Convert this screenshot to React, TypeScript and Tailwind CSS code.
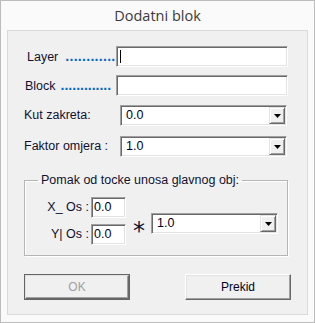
import React from "react";

const sunken =
  "border border-t-[#a0a0a0] border-l-[#a0a0a0] border-b-white border-r-white shadow-[inset_1px_1px_0_#696969,inset_-1px_-1px_0_#e3e3e3] bg-white";

function Arrow() {
  return (
    <div className="w-[16px] h-[17px] bg-[#f0f0f0] border border-t-[#e3e3e3] border-l-[#e3e3e3] border-b-[#696969] border-r-[#696969] shadow-[inset_1px_1px_0_#ffffff,inset_-1px_-1px_0_#a0a0a0] flex items-center justify-center">
      <svg width="7" height="4" viewBox="0 0 7 4">
        <path d="M0 0H7L3.5 4Z" fill="#000" />
      </svg>
    </div>
  );
}

function Select({ value, w }: { value: string; w: string }) {
  return (
    <div className={`${sunken} ${w} h-[21px] flex items-center pl-[5px] pr-[1px] justify-between`}>
      <span className="text-[#000022]">{value}</span>
      <Arrow />
    </div>
  );
}

export default function App() {
  return (
    <div className="w-[315px] h-[323px] border border-[#bcbcbc] bg-[#fafafa] flex flex-col font-['Liberation_Sans',Arial,sans-serif] text-[12.5px] text-black">
      <div className="h-[29px] flex items-center justify-center font-['Open_Sans',sans-serif] text-[14.5px] text-[#3a3a3a]">
        Dodatni blok
      </div>
      <div className="ml-[6px] w-[301px] h-[285px] border border-[#dadada] bg-[#f0f0f0] flex flex-col">
        <div className="flex items-center h-[20px] mt-[15px]">
          <div className="w-[108px] pl-[19px] text-[#101030] whitespace-nowrap">
            Layer
            <span className="ml-[7px] text-[14px] font-bold text-[#0066cc] tracking-[0.3px]">............</span>
          </div>
          <div className={`${sunken} w-[172px] h-[21px] flex items-center pl-[3px]`}>
            <div className="w-[1px] h-[13px] bg-black" />
          </div>
        </div>
        <div className="flex items-center h-[20px] mt-[9px]">
          <div className="w-[108px] pl-[17px] text-[#101030] whitespace-nowrap">
            Block
            <span className="ml-[5px] text-[14px] font-bold text-[#0066cc] tracking-[0px]">.............</span>
          </div>
          <div className={`${sunken} w-[172px] h-[21px]`} />
        </div>
        <div className="flex items-center h-[21px] mt-[10px]">
          <div className="w-[112px] pl-[16px] text-[#101030]">Kut zakreta:</div>
          <Select value="0.0" w="w-[167px]" />
        </div>
        <div className="flex items-center h-[21px] mt-[10px]">
          <div className="w-[112px] pl-[16px] text-[#101030]">Faktor omjera :</div>
          <Select value="1.0" w="w-[167px]" />
        </div>
        <fieldset className="ml-[16px] mt-[15px] w-[264px] h-[84px] border border-[#b5b5b5] shadow-[1px_1px_0_#ffffff,inset_1px_1px_0_#ffffff] flex">
          <legend className="ml-[13px] px-[3px] text-[#101030] leading-[16px]">
            Pomak od tocke unosa glavnog obj:
          </legend>
          <div className="flex items-center mt-[9px]">
            <div className="flex flex-col gap-[6px]">
              <div className="flex items-center">
                <div className="w-[66px] text-right pr-[2px] text-[#101030]">X_ Os :</div>
                <div className={`${sunken} w-[35px] h-[21px] pl-[2px] flex items-center text-[#000022]`}>0.0</div>
              </div>
              <div className="flex items-center">
                <div className="w-[66px] text-right pr-[2px] text-[#101030]">Y| Os :</div>
                <div className={`${sunken} w-[35px] h-[21px] pl-[2px] flex items-center text-[#000022]`}>0.0</div>
              </div>
            </div>
            <div className="ml-[7px] w-[12px] text-[24px] leading-none pt-[20px] text-[#101030] font-['DejaVu_Sans',sans-serif]">*</div>
            <div className="ml-[6px] mt-[5px]">
              <Select value="1.0" w="w-[127px]" />
            </div>
          </div>
        </fieldset>
        <div className="flex mt-[18px] ml-[16px] gap-[55px]">
          <div className="w-[106px] h-[26px] border border-[#646464] flex">
            <div className="flex-1 border border-t-[#e3e3e3] border-l-[#e3e3e3] border-b-[#696969] border-r-[#696969] shadow-[inset_-1px_-1px_0_#a0a0a0] flex items-center justify-center text-[#a0a0a0] text-[12px]">
              OK
            </div>
          </div>
          <div className="w-[106px] h-[26px] border border-t-[#ffffff] border-l-[#ffffff] border-b-[#696969] border-r-[#696969] shadow-[inset_-1px_-1px_0_#a0a0a0,inset_1px_1px_0_#e3e3e3] flex items-center justify-center text-[#000022] text-[12px]">
            Prekid
          </div>
        </div>
      </div>
    </div>
  );
}
